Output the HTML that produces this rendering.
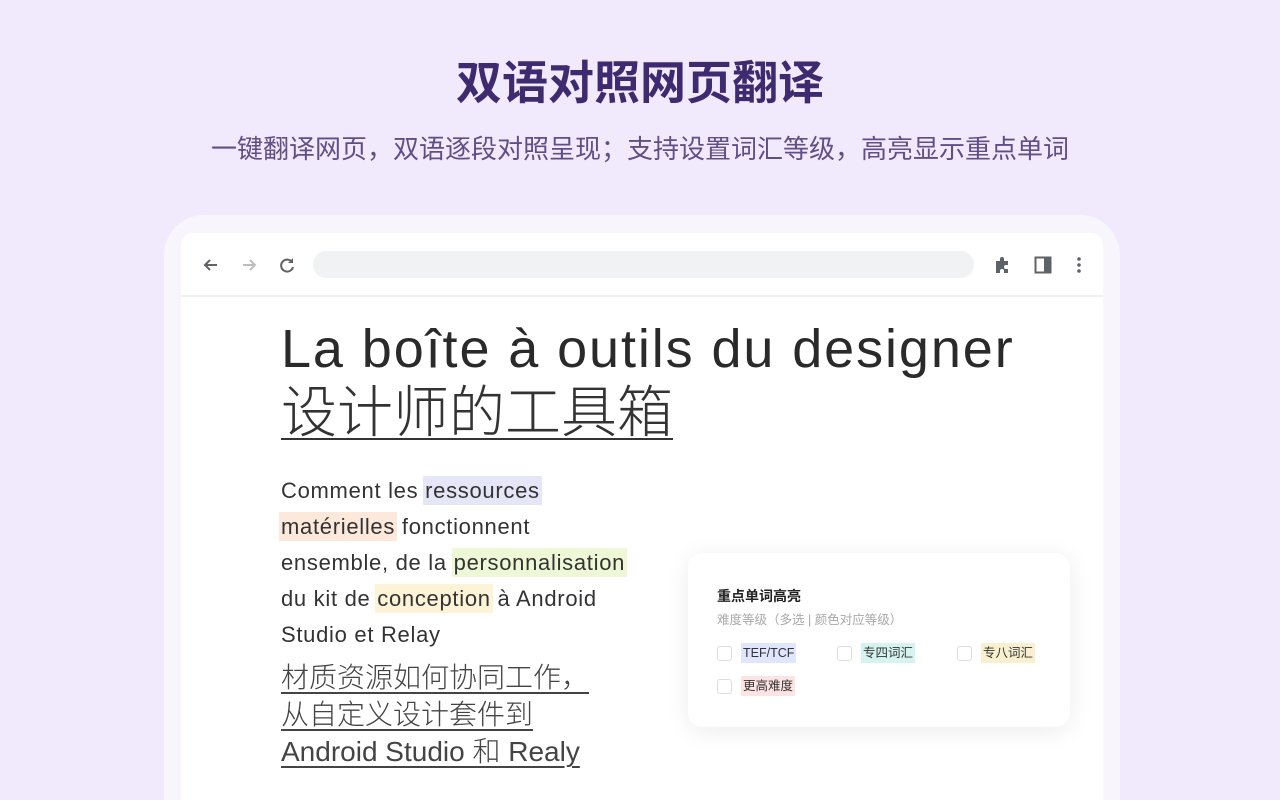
<!DOCTYPE html>
<html><head><meta charset="utf-8"><style>
*{margin:0;padding:0;box-sizing:border-box}
html{width:1280px;height:800px;overflow:hidden}
body{width:1280px;height:800px;overflow:hidden;background:#f1eafc;font-family:"Liberation Sans","Noto Sans CJK SC",sans-serif;position:relative}
.t1{position:absolute;top:47px;left:0;width:1280px;text-align:center;font-size:46px;font-weight:bold;color:#3e2a6e}
.t2{position:absolute;top:129px;left:0;width:1280px;text-align:center;font-size:26px;color:#5e4f86}
.frame{position:absolute;left:164px;top:215px;width:956px;height:585px;background:#f8f5fd;border-radius:40px 40px 0 0}
.win{position:absolute;left:181px;top:233px;width:922px;height:567px;background:#fff;border-radius:12px 12px 0 0}
.bar{position:absolute;left:0;top:0;width:922px;height:64px;border-bottom:2px solid #f0f0f2}
.url{position:absolute;left:132px;top:18px;width:661px;height:27px;background:#f1f2f4;border-radius:14px}
.h1{position:absolute;left:281px;top:318px;font-size:54px;letter-spacing:1.9px;color:#2a2a2a;white-space:nowrap}
.h2{position:absolute;left:281px;top:368px;font-size:56px;color:#333;text-decoration:underline;text-decoration-thickness:2px;text-underline-offset:6px;font-family:"Noto Sans CJK SC",sans-serif;font-weight:300}
.body{position:absolute;left:281px;top:473px;font-size:22px;letter-spacing:0.7px;line-height:36px;color:#333;width:380px}
.hl{padding:2px 2px;margin:0 -2px}
.cn{position:absolute;left:281px;top:659px;font-size:28px;line-height:37px;color:#444;font-family:"Liberation Sans","Noto Sans CJK SC",sans-serif;font-weight:300}
.cn span{text-decoration:underline;text-decoration-thickness:1.5px;text-underline-offset:5px}
.card{position:absolute;left:688px;top:553px;width:382px;height:174px;background:#fff;border-radius:14px;box-shadow:0 4px 24px rgba(0,0,0,.08)}
.card .tt{position:absolute;left:29px;top:33px;font-size:14px;font-weight:bold;color:#222}
.card .st{position:absolute;left:29px;top:56px;font-size:12.5px;color:#a8a8a8}
.opt{position:absolute;font-size:12.5px;color:#333;display:flex;align-items:center;height:20px;line-height:20px}
.cb{width:15px;height:15px;border:1px solid #ddd;border-radius:3px;margin-right:9px}
.opt b{font-weight:normal;padding:0 2px;height:20px;line-height:20px;display:inline-block}
</style></head><body>
<div class="t1">双语对照网页翻译</div>
<div class="t2">一键翻译网页，双语逐段对照呈现；支持设置词汇等级，高亮显示重点单词</div>
<div class="frame"></div>
<div class="win">
 <div class="bar">
  <svg style="position:absolute;left:20px;top:22px" width="20" height="20" viewBox="0 0 20 20"><path d="M16 10H4M9 5l-5 5 5 5" stroke="#5f6368" stroke-width="2" fill="none"/></svg>
  <svg style="position:absolute;left:58px;top:22px" width="20" height="20" viewBox="0 0 20 20"><path d="M4 10h12M11 5l5 5-5 5" stroke="#bdbdbd" stroke-width="2" fill="none"/></svg>
  <svg style="position:absolute;left:96px;top:22px" width="20" height="20" viewBox="0 0 20 20"><path d="M15 7a6 6 0 1 0 1 5" stroke="#5f6368" stroke-width="2" fill="none"/><path d="M16 3v5h-5z" fill="#5f6368"/></svg>
  <div class="url"></div>
  <svg style="position:absolute;left:812px;top:22px" width="20" height="20" viewBox="0 0 20 20"><path d="M3 6h4V4a2 2 0 0 1 4 0v2h4v4h-2a2 2 0 0 0 0 4h2v4h-4v-2a2 2 0 0 0-4 0v2H3z" fill="#5f6368"/></svg>
  <svg style="position:absolute;left:852px;top:22px" width="20" height="20" viewBox="0 0 20 20"><rect x="2.5" y="2.5" width="15" height="15" fill="none" stroke="#5f6368" stroke-width="2"/><rect x="11" y="3" width="6" height="14" fill="#5f6368"/></svg>
  <svg style="position:absolute;left:888px;top:22px" width="20" height="20" viewBox="0 0 20 20"><circle cx="10" cy="4" r="1.8" fill="#5f6368"/><circle cx="10" cy="10" r="1.8" fill="#5f6368"/><circle cx="10" cy="16" r="1.8" fill="#5f6368"/></svg>
 </div>
</div>
<div class="h1">La boîte à outils du designer</div>
<div class="h2">设计师的工具箱</div>
<div class="body">Comment les <span class="hl" style="background:#e6e6f9">ressources</span><br><span class="hl" style="background:#fde9dc">matérielles</span> fonctionnent<br>ensemble, de la <span class="hl" style="background:#eef7d6">personnalisation</span><br>du kit de <span class="hl" style="background:#fdf4d8">conception</span> à Android<br>Studio et Relay</div>
<div class="cn"><span>材质资源如何协同工作，</span><br><span>从自定义设计套件到</span><br><span>Android Studio 和 Realy</span></div>
<div class="card">
 <div class="tt">重点单词高亮</div>
 <div class="st">难度等级（多选 | 颜色对应等级）</div>
 <div class="opt" style="left:29px;top:90px"><div class="cb"></div><b style="background:#dfe6fd">TEF/TCF</b></div>
 <div class="opt" style="left:149px;top:90px"><div class="cb"></div><b style="background:#d5f4ef">专四词汇</b></div>
 <div class="opt" style="left:269px;top:90px"><div class="cb"></div><b style="background:#f8f0cf">专八词汇</b></div>
 <div class="opt" style="left:29px;top:123px"><div class="cb"></div><b style="background:#fde3e3">更高难度</b></div>
</div>
</body></html>
